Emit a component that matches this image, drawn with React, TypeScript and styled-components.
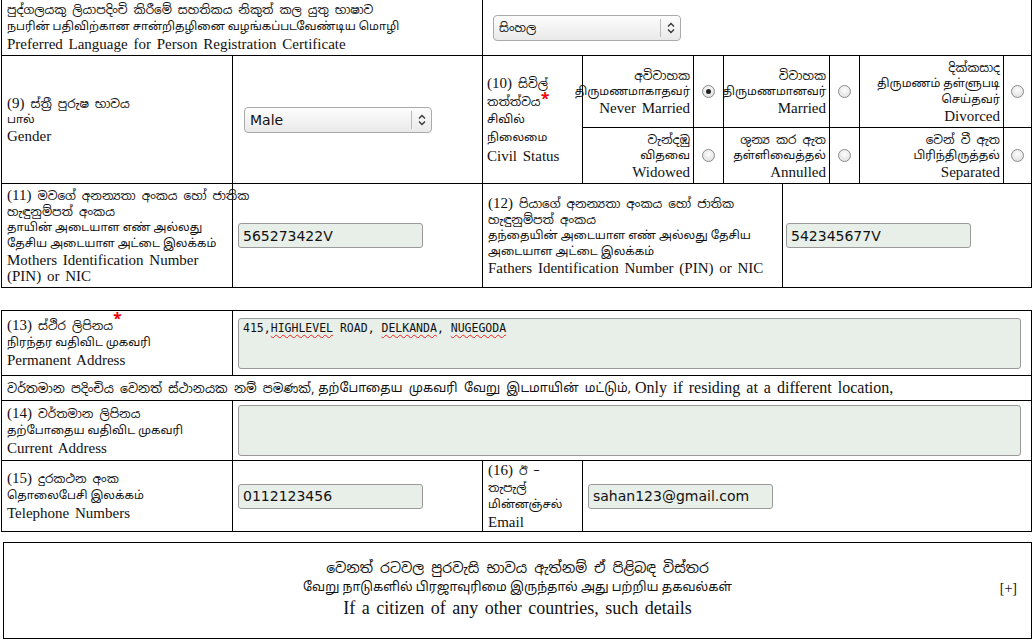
import React from 'react'
import styled, { createGlobalStyle } from 'styled-components'

const GlobalStyle = createGlobalStyle`
body {
  margin: 0;
  background: #fff;
  color: #111;
  font-family: "Liberation Serif", serif;
}
`

const Page = styled.div`
width: 1031px;
padding-left: 1px;
`

const Table = styled.div<{ $top?: number; $open?: boolean }>`
margin-top: ${p => p.$top ?? 0}px;
border: 1px solid #000;
border-top-width: ${p => (p.$open ? 0 : 1)}px;
border-bottom: none;
`

const Row = styled.div<{ $cols: string; $h: number; $rows?: string }>`
display: grid;
grid-template-columns: ${p => p.$cols};
grid-template-rows: ${p => p.$rows ?? 'auto'};
height: ${p => p.$h}px;
border-bottom: 1px solid #000;
box-sizing: content-box;
`

const Cell = styled.div<{ $pad?: string; $span?: number; $last?: boolean; $under?: boolean; $right?: boolean; $center?: boolean }>`
display: flex;
align-items: center;
justify-content: ${p => (p.$right ? 'flex-end' : p.$center ? 'center' : 'flex-start')};
text-align: ${p => (p.$right ? 'right' : 'left')};
padding: ${p => p.$pad ?? '0 5px'};
box-sizing: border-box;
min-width: 0;
border-right: ${p => (p.$last ? 'none' : '1px solid #000')};
border-bottom: ${p => (p.$under ? '1px solid #000' : 'none')};
grid-row: ${p => (p.$span ? `span ${p.$span}` : 'auto')};
`

const Label = styled.div<{ $lh?: number }>`
line-height: ${p => p.$lh ?? 16}px;
`

const Si = styled.span<{ $size?: number; $nowrap?: boolean }>`
display: block;
font-family: "Noto Sans Sinhala", "Noto Sans", "DejaVu Sans", sans-serif;
font-size: ${p => p.$size ?? 12}px;
white-space: ${p => (p.$nowrap ? 'nowrap' : 'normal')};
`

const Ta = styled.span<{ $size?: number; $nowrap?: boolean }>`
display: block;
font-family: "Noto Sans Tamil", "Noto Sans", "DejaVu Sans", sans-serif;
font-size: ${p => p.$size ?? 11.5}px;
white-space: ${p => (p.$nowrap ? 'nowrap' : 'normal')};
`

const En = styled.span`
display: block;
font-size: 15px;
word-spacing: 2px;
`

const Num = styled.span`
font-family: "Liberation Serif", serif;
font-size: 15px;
`

const Star = styled.span<{ $lift?: number }>`
position: relative;
top: -${p => p.$lift ?? 5}px;
color: #e00;
font-size: 16px;
font-weight: bold;
line-height: 0;
`

const Field = styled.input`
width: 185px;
height: 25px;
box-sizing: border-box;
border: 1px solid #999;
border-radius: 3px;
background: #e8efe9;
padding: 0 4px;
font-family: "DejaVu Sans", sans-serif;
font-size: 14px;
color: #111;
outline: none;
`

const Area = styled.div<{ $h: number }>`
flex: 1;
height: ${p => p.$h}px;
box-sizing: border-box;
border: 1px solid #999;
border-radius: 3px;
background: #e8efe9;
padding: 2px 4px;
font-family: "DejaVu Sans Mono", "Liberation Mono", monospace;
font-size: 11.5px;
line-height: 14px;
color: #111;
`

const Spell = styled.span`
text-decoration: underline wavy #e22;
text-decoration-thickness: 1px;
text-underline-offset: 2px;
`

const SelectWrap = styled.div`
position: relative;
width: 188px;
height: 26px;
`

const Select = styled.select<{ $si?: boolean }>`
appearance: none;
width: 100%;
height: 100%;
border: 1px solid #aaa;
border-radius: 4px;
background: linear-gradient(#fdfdfd, #e9e9e9);
padding: 0 24px 0 5px;
font-family: ${p => (p.$si ? '"Noto Sans Sinhala", "Noto Sans", sans-serif' : '"DejaVu Sans", sans-serif')};
font-size: ${p => (p.$si ? 12 : 14)}px;
color: #111;
outline: none;
`

const Arrows = styled.div`
position: absolute;
right: 0;
top: 4px;
bottom: 4px;
width: 20px;
border-left: 1px solid #bbb;
display: flex;
align-items: center;
justify-content: center;
pointer-events: none;
`

const Radio = styled.span<{ $on?: boolean }>`
display: inline-flex;
align-items: center;
justify-content: center;
width: 13px;
height: 13px;
box-sizing: border-box;
border-radius: 50%;
border: 1px solid #8a8a8a;
background: radial-gradient(circle at 50% 35%, #fbfbfb, #dcdcdc);
&::after {
  content: '';
  width: 5px;
  height: 5px;
  border-radius: 50%;
  background: #222;
  display: ${p => (p.$on ? 'block' : 'none')};
}
`

const Note = styled.div`
display: flex;
align-items: center;
padding: 0 5px;
white-space: nowrap;
font-size: 12.5px;
& > span {
  font-family: "Noto Sans Sinhala", "Noto Sans Tamil", "Noto Sans", sans-serif;
  margin-right: 4px;
}
& > b {
  font-weight: normal;
  font-family: "Liberation Serif", serif;
  font-size: 16px;
  word-spacing: 2px;
}
`

const Box = styled.div`
position: relative;
margin: 10px 0 0 2px;
width: 1029px;
height: 97px;
box-sizing: border-box;
border: 1px solid #000;
padding-bottom: 6px;
display: flex;
flex-direction: column;
align-items: center;
justify-content: center;
line-height: 20px;
text-align: center;
`

const BoxEn = styled.span`
font-size: 18px;
word-spacing: 2px;
`

const Toggle = styled.span`
position: absolute;
right: 14px;
top: 36px;
font-family: "Liberation Serif", serif;
font-size: 14px;
`

const Chevrons = () => (
  <svg width="8" height="12" viewBox="0 0 8 12" fill="none" stroke="#333" strokeWidth="1.3">
    <path d="M1 4.5 L4 1.5 L7 4.5" />
    <path d="M1 7.5 L4 10.5 L7 7.5" />
  </svg>
)

const Dropdown = ({ value, si }: { value: string; si?: boolean }) => (
  <SelectWrap>
    <Select $si={si} defaultValue={value}>
      <option>{value}</option>
    </Select>
    <Arrows><Chevrons /></Arrows>
  </SelectWrap>
)

const statuses = [
  { si: 'අවිවාහක', ta: 'திருமணமாகாதவர்', en: 'Never Married', on: true },
  { si: 'විවාහක', ta: 'திருமணமானவர்', en: 'Married' },
  { si: 'දික්කසාද', ta: 'திருமணம் தள்ளுபடி செய்தவர்', en: 'Divorced' },
  { si: 'වැන්දඹු', ta: 'விதவை', en: 'Widowed' },
  { si: 'ශුන්‍ය කර ඇත', ta: 'தள்ளிவைத்தல்', en: 'Annulled' },
  { si: 'වෙන් වී ඇත', ta: 'பிரிந்திருத்தல்', en: 'Separated' },
]

const App = () => {
  return (
    <Page>
      <GlobalStyle />
      <Table $open>
        <Row $cols="481px 1fr" $h={55}>
          <Cell>
            <Label $lh={17}>
              <Si>පුද්ගලයකු ලියාපදිංචි කිරීමේ සහතිකය නිකුත් කල යුතු භාෂාව</Si>
              <Ta>நபரின் பதிவிற்கான சான்றிதழினை வழங்கப்படவேண்டிய மொழி</Ta>
              <En>Preferred Language for Person Registration Certificate</En>
            </Label>
          </Cell>
          <Cell $last $pad="0 10px">
            <Dropdown value="සිංහල" si />
          </Cell>
        </Row>
        <Row $cols="231px 250px 100px 111px 30px 106px 30px 144px 1fr" $rows="72px 55px" $h={127}>
          <Cell $span={2}>
            <Label>
              <Si><Num>(9)</Num> ස්ත්‍රී පුරුෂ භාවය</Si>
              <Ta>பால்</Ta>
              <En>Gender</En>
            </Label>
          </Cell>
          <Cell $span={2} $pad="0 11px">
            <Dropdown value="Male" />
          </Cell>
          <Cell $span={2} $pad="0 4px">
            <Label $lh={18}>
              <Si><Num>(10)</Num> සිවිල් තත්ත්වය<Star $lift={1}>*</Star></Si>
              <Ta>சிவில் நிலைமை</Ta>
              <En>Civil Status</En>
            </Label>
          </Cell>
          {statuses.map((s, idx) => [
            <Cell key={`l${idx}`} $right $under={idx < 3} $pad="0 3px">
              <Label>
                <Si>{s.si}</Si>
                <Ta>{s.ta}</Ta>
                <En>{s.en}</En>
              </Label>
            </Cell>,
            <Cell key={`r${idx}`} $center $under={idx < 3} $last={idx % 3 === 2} $pad="0">
              <Radio $on={s.on} />
            </Cell>,
          ])}
        </Row>
        <Row $cols="231px 250px 300px 1fr" $h={103}>
          <Cell>
            <Label>
              <Si $nowrap><Num>(11)</Num> මවගේ අනන්‍යතා අංකය හෝ ජාතික<br />හැඳුනුම්පත් අංකය</Si>
              <Ta $nowrap>தாயின் அடையாள எண் அல்லது<br />தேசிய அடையாள அட்டை இலக்கம்</Ta>
              <En>Mothers Identification Number<br />(PIN) or NIC</En>
            </Label>
          </Cell>
          <Cell>
            <Field defaultValue="565273422V" />
          </Cell>
          <Cell>
            <Label>
              <Si $nowrap><Num>(12)</Num> පියාගේ අනන්‍යතා අංකය හෝ ජාතික<br />හැඳුනුම්පත් අංකය</Si>
              <Ta $nowrap>தந்தையின் அடையாள எண் அல்லது தேசிய<br />அடையாள அட்டை இலக்கம்</Ta>
              <En>Fathers Identification Number (PIN) or NIC</En>
            </Label>
          </Cell>
          <Cell $last $pad="0 3px">
            <Field defaultValue="542345677V" />
          </Cell>
        </Row>
      </Table>

      <Table $top={22}>
        <Row $cols="231px 1fr" $h={64}>
          <Cell>
            <Label $lh={17}>
              <Si><Num>(13)</Num> ස්ථිර ලිපිනය<Star>*</Star></Si>
              <Ta>நிரந்தர வதிவிட முகவரி</Ta>
              <En>Permanent Address</En>
            </Label>
          </Cell>
          <Cell $last $pad="0 10px 0 5px">
            <Area $h={51}>
              415,<Spell>HIGHLEVEL</Spell> ROAD, <Spell>DELKANDA</Spell>, <Spell>NUGEGODA</Spell>
            </Area>
          </Cell>
        </Row>
        <Row $cols="1fr" $h={24}>
          <Note>
            <span>වර්තමාන පදිංචිය වෙනත් ස්ථානයක නම් පමණක්,</span>
            <span>தற்போதைய முகவரி வேறு இடமாயின் மட்டும்,</span>
            <b>Only if residing at a different location,</b>
          </Note>
        </Row>
        <Row $cols="231px 1fr" $h={59}>
          <Cell>
            <Label $lh={17}>
              <Si><Num>(14)</Num> වර්තමාන ලිපිනය</Si>
              <Ta>தற்போதைய வதிவிட முகவரி</Ta>
              <En>Current Address</En>
            </Label>
          </Cell>
          <Cell $last $pad="0 10px 0 5px">
            <Area $h={51} />
          </Cell>
        </Row>
        <Row $cols="231px 250px 100px 1fr" $h={70}>
          <Cell>
            <Label $lh={17}>
              <Si><Num>(15)</Num> දුරකථන අංක</Si>
              <Ta>தொலைபேசி இலக்கம்</Ta>
              <En>Telephone Numbers</En>
            </Label>
          </Cell>
          <Cell>
            <Field defaultValue="0112123456" />
          </Cell>
          <Cell>
            <Label $lh={17}>
              <Si><Num>(16)</Num> ඊ – තැපැල්</Si>
              <Ta>மின்னஞ்சல்</Ta>
              <En>Email</En>
            </Label>
          </Cell>
          <Cell $last>
            <Field defaultValue="sahan123@gmail.com" />
          </Cell>
        </Row>
      </Table>

      <Box>
        <Si $size={14}>වෙනත් රටවල පුරවැසි භාවය ඇත්නම් ඒ පිළිබඳ විස්තර</Si>
        <Ta $size={12.5}>வேறு நாடுகளில் பிரஜாவுரிமை இருந்தால் அது பற்றிய தகவல்கள்</Ta>
        <BoxEn>If a citizen of any other countries, such details</BoxEn>
        <Toggle>[+]</Toggle>
      </Box>
    </Page>
  )
}

export default App
